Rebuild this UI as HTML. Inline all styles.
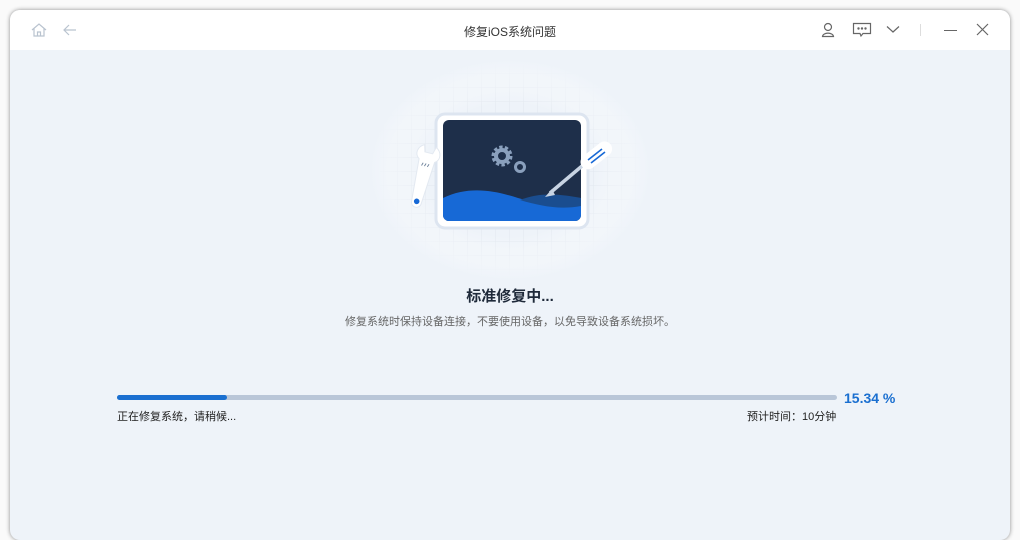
<!DOCTYPE html>
<html><head><meta charset="utf-8"><style>
*{margin:0;padding:0;box-sizing:border-box}
body{width:1020px;height:527px;background:#fafafa;font-family:"Liberation Sans","Noto Sans CJK SC",sans-serif;position:relative;overflow:hidden}
.win{position:absolute;left:10px;top:10px;width:1000px;height:530px;border-radius:10px;background:#eef3f9;box-shadow:0 0 4px rgba(0,0,0,.45);overflow:hidden}
.hdr{height:40px;background:#fff;position:relative}
.title{position:absolute;left:0;right:0;top:13px;text-align:center;font-size:12px;color:#333}
.abs{position:absolute}
.t1{position:absolute;left:0;right:0;top:275px;text-align:center;font-size:15px;font-weight:bold;color:#1f2a3a}
.t2{position:absolute;left:0;right:0;top:303px;text-align:center;font-size:11px;color:#666}
.track{position:absolute;left:107px;top:385px;width:720px;height:5px;border-radius:3px;background:#b9c6d8}
.fill{width:110px;height:5px;border-radius:3px;background:#1a6fd0}
</style></head><body>
<div class="win">
<div class="hdr">
<svg class="abs" style="left:20px;top:12px" width="18" height="16" viewBox="0 0 18 16" fill="none" stroke="#b9c3cf" stroke-width="1.2"><path d="M2 8 L9 2 L16 8 M4 6.5 V14 H14 V6.5 M7.5 14 V10 H10.5 V14"/></svg>
<svg class="abs" style="left:52px;top:13px" width="16" height="14" viewBox="0 0 16 14" fill="none" stroke="#b9c3cf" stroke-width="1.2"><path d="M14 7 H2 M7 2 L2 7 L7 12"/></svg>
<div class="title">修复iOS系统问题</div>
<svg class="abs" style="left:811px;top:12px" width="14" height="16" viewBox="0 0 14 16" fill="none" stroke="#666" stroke-width="1.2"><circle cx="7" cy="5" r="3.5"/><path d="M1.5 14.5 C2 10 12 10 12.5 14.5 Z"/></svg>
<svg class="abs" style="left:842px;top:12px" width="20" height="16" viewBox="0 0 20 16" fill="none" stroke="#666" stroke-width="1.2"><path d="M1.5 1.5 H18.5 V11.5 H11 L9 14 L8 11.5 H1.5 Z"/><circle cx="6.5" cy="6.5" r=".6" fill="#666"/><circle cx="10" cy="6.5" r=".6" fill="#666"/><circle cx="13.5" cy="6.5" r=".6" fill="#666"/></svg>
<svg class="abs" style="left:876px;top:15px" width="14" height="9" viewBox="0 0 14 9" fill="none" stroke="#666" stroke-width="1.2"><path d="M1 1.5 L7 7 L13 1.5"/></svg>
<div class="abs" style="left:910px;top:14px;width:1px;height:12px;background:#ddd"></div>
<div class="abs" style="left:934px;top:20px;width:13px;height:1.3px;background:#666"></div>
<svg class="abs" style="left:966px;top:13px" width="13" height="13" viewBox="0 0 13 13" stroke="#666" stroke-width="1.2"><path d="M1 1 L12 12 M12 1 L1 12"/></svg>
</div>
<svg class="abs" style="left:360px;top:50px" width="280" height="220" viewBox="0 0 280 220">
<defs><pattern id="g" width="14" height="14" patternUnits="userSpaceOnUse"><path d="M14 0 V14 M0 14 H14" stroke="#e1e7ef" stroke-width="1" fill="none"/></pattern>
<radialGradient id="fd" cx=".5" cy=".5" r=".5"><stop offset=".6" stop-color="#fff" stop-opacity="0"/><stop offset="1" stop-color="#eef3f9"/></radialGradient></defs>
<rect x="10" y="5" width="260" height="210" fill="url(#g)"/>
<rect x="0" y="0" width="280" height="220" fill="url(#fd)"/>
<rect x="66" y="54" width="152" height="114" rx="9" fill="#fff" stroke="#dde5f0" stroke-width="3"/>
<rect x="73" y="60" width="138" height="101" rx="6" fill="#1e2f4a"/>
<path d="M73 138 C98 126 123 130 148 138 C173 146 193 136 211 138 V155 a6 6 0 0 1 -6 6 H79 a6 6 0 0 1 -6 -6 Z" fill="#1769d6"/>
<path d="M150 140 C170 132 190 134 211 138 V146 C190 150 170 146 150 140Z" fill="#1a4d8f"/>
<circle cx="132" cy="96" r="8" fill="none" stroke="#8aa0bd" stroke-width="5" stroke-dasharray="3 2"/>
<circle cx="132" cy="96" r="6" fill="none" stroke="#8aa0bd" stroke-width="4"/>
<circle cx="150" cy="107" r="4.5" fill="none" stroke="#8aa0bd" stroke-width="3"/>
<path d="M180 133 L212 106" stroke="#c8d4e3" stroke-width="3.5"/>
<path d="M175 137 L182 129 L185 135Z" fill="#c8d4e3"/>
<rect x="208" y="88" width="36" height="15" rx="7.5" transform="rotate(-38 226 95)" fill="#fff"/>
<path d="M218 100 L232 89 M221 103 L235 92" stroke="#1769d6" stroke-width="1.6"/>
<g transform="rotate(14 52 120)">
<path d="M44 100 C38 96 40 88 46 85 L48 92 L56 92 L58 85 C64 88 66 96 60 100 L57 143 a5 5 0 0 1 -10 0 Z" fill="#fff" stroke="#e3e9f1"/>
<circle cx="52" cy="142" r="2.8" fill="#1769d6"/>
<path d="M48 106 L49 103 M51 106 L52 103 M54 106 L55 103" stroke="#6a7f99" stroke-width=".9"/>
</g>
</svg>
<div class="t1">标准修复中...</div>
<div class="t2">修复系统时保持设备连接，不要使用设备，以免导致设备系统损坏。</div>
<div class="track"><div class="fill"></div></div>
<div class="abs" style="left:834px;top:380px;font-size:14px;font-weight:bold;color:#1a6fd0">15.34 %</div>
<div class="abs" style="left:107px;top:398px;font-size:11px;color:#222">正在修复系统，请稍候...</div>
<div class="abs" style="left:737px;top:398px;font-size:11px;color:#222">预计时间：10分钟</div>
</div>
</body></html>
